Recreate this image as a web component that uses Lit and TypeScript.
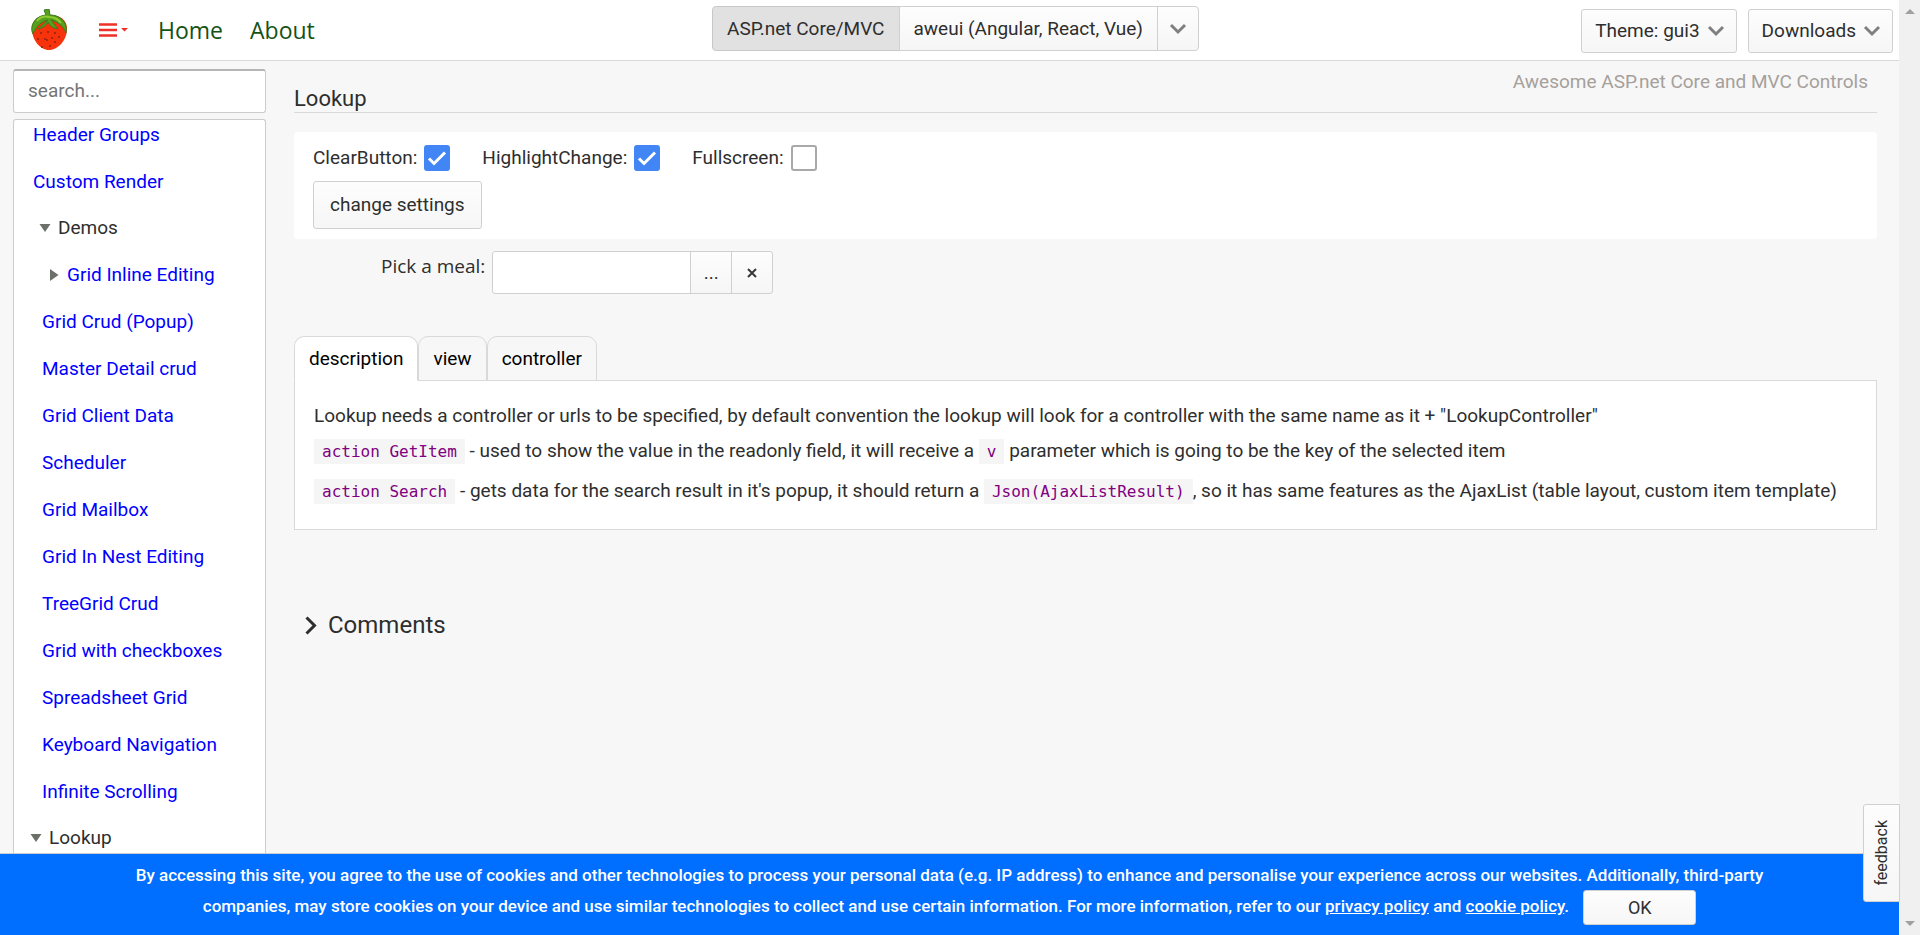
import { LitElement, html, css, nothing } from "lit";
import { customElement, state } from "lit/decorators.js";

interface MenuItem {
  label: string;
  level: number;
  node?: "open" | "closed";
  plain?: boolean;
}

const MENU: MenuItem[] = [
  { label: "Header Groups", level: 0 },
  { label: "Custom Render", level: 0 },
  { label: "Demos", level: 1, node: "open", plain: true },
  { label: "Grid Inline Editing", level: 2, node: "closed" },
  { label: "Grid Crud (Popup)", level: 1 },
  { label: "Master Detail crud", level: 1 },
  { label: "Grid Client Data", level: 1 },
  { label: "Scheduler", level: 1 },
  { label: "Grid Mailbox", level: 1 },
  { label: "Grid In Nest Editing", level: 1 },
  { label: "TreeGrid Crud", level: 1 },
  { label: "Grid with checkboxes", level: 1 },
  { label: "Spreadsheet Grid", level: 1 },
  { label: "Keyboard Navigation", level: 1 },
  { label: "Infinite Scrolling", level: 1 },
  { label: "Lookup", level: 0, node: "open", plain: true },
];

const chevron = html`<svg class="chevron" width="18" height="12" viewBox="0 0 18 12" aria-hidden="true">
  <path d="M2 2 L9 9 L16 2" fill="none" stroke="#808080" stroke-width="3" />
</svg>`;

@customElement("app-root")
export class AppRoot extends LitElement {
  @state() private tab = "description";

  static styles = css`
    :host {
      display: flex;
      height: 100vh;
      overflow: hidden;
      background: #f7f7f7;
      color: #2e2e2e;
      font: 19px/28px Roboto, sans-serif;
    }
    * { box-sizing: border-box; }
    button, input { font: inherit; color: inherit; margin: 0; }
    a { text-decoration: none; }
    .page {
      position: relative;
      flex: 1;
      min-width: 0;
      display: flex;
      flex-direction: column;
    }
    .btn {
      display: inline-flex;
      align-items: center;
      justify-content: center;
      gap: 7px;
      padding: 0 14px;
      border: 1px solid #d0d0d0;
      border-radius: 3px;
      background: linear-gradient(#fdfdfd, #f6f6f6);
      white-space: nowrap;
      cursor: pointer;
    }
    .header {
      display: grid;
      grid-template-columns: 1fr auto 1fr;
      height: 61px;
      flex: none;
      padding: 0 6px 0 20px;
      background: #fff;
      border-bottom: 1px solid #d9d9d9;
    }
    .switch, .tools { margin-left: -1px; }
    .nav { display: flex; align-items: center; padding-left: 8px; }
    .logo { display: flex; margin-right: 29px; }
    .burger {
      display: flex;
      align-items: center;
      gap: 4px;
      margin-right: 30px;
      padding: 0;
      border: 0;
      background: none;
    }
    .nav-link {
      margin-right: 27px;
      color: #145214;
      font-family: "Open Sans", sans-serif;
      font-size: 23px;
    }
    .switch { display: flex; height: 45px; margin-top: 6px; }
    .switch .btn { border-radius: 0; margin-left: -1px; }
    .switch .btn:first-child { border-radius: 4px 0 0 4px; }
    .switch .btn:last-child { border-radius: 0 4px 4px 0; padding: 0 11px; }
    .switch .btn.on { background: #e1e1e1; border-color: #c8c8c8; }
    .tools { display: flex; justify-content: flex-end; gap: 11px; padding-top: 9px; }
    .tools .btn { height: 44px; padding: 0 11px 0 13px; }
    .body { display: flex; flex: 1; min-height: 0; padding: 8px 22px 0 13px; }
    .side {
      display: flex;
      flex-direction: column;
      width: 253px;
      flex: none;
      gap: 6px;
    }
    .search {
      width: 100%;
      height: 44px;
      padding: 0 14px 2px;
      border: 1px solid #ccc;
      border-top: 2px solid #b5b5b5;
      border-radius: 3px;
      background: #fff;
    }
    .search::placeholder { color: #757575; opacity: 1; }
    .menu {
      flex: 1;
      min-height: 0;
      overflow: hidden;
      margin: 0;
      padding: 0 0 0 19px;
      list-style: none;
      border: 1px solid #ccc;
      border-bottom: 0;
      border-radius: 3px 3px 0 0;
      background: #fff;
    }
    .item { display: flex; align-items: center; height: 47px; gap: 7px; }
    .menu .item:first-child { height: 30px; margin-bottom: 8px; }
    .lv1 { padding-left: 9px; }
    .lv2 { padding-left: 17px; }
    .item.open { height: 46px; margin-left: -3px; }
    .item a { color: #00f; }
    .main { flex: 1; min-width: 0; margin-left: 28px; }
    .top {
      display: flex;
      justify-content: space-between;
      height: 44px;
      border-bottom: 1px solid #d9d9d9;
    }
    .title { margin: 15px 0 0; font-weight: 400; font-size: 22px; line-height: 30px; }
    .slogan { margin-right: 9px; line-height: 26px; color: #a6a09c; }
    .settings {
      display: flex;
      flex-direction: column;
      align-items: flex-start;
      gap: 10px;
      margin-top: 19px;
      padding: 13px 19px 10px;
      border-radius: 4px;
      background: #fff;
    }
    .checks { display: flex; gap: 32px; height: 26px; align-items: center; }
    .check { display: flex; align-items: center; gap: 7px; line-height: 26px; }
    .check input {
      appearance: none;
      width: 26px;
      height: 26px;
      border: 2px solid #a9a9a9;
      border-radius: 3px;
      background: #fff;
    }
    .check input:checked {
      border-color: #4285f4;
      background: #4285f4 url("data:image/svg+xml,%3Csvg xmlns='http://www.w3.org/2000/svg' viewBox='0 0 22 22'%3E%3Cpath d='M3 11.5l5 5L19 5.500' fill='none' stroke='white' stroke-width='3'/%3E%3C/svg%3E") center / 22px no-repeat;
    }
    .settings .btn { height: 48px; padding: 0 16px; }
    .meal { display: flex; gap: 7px; margin: 12px 0 0 87px; }
    .meal-label { font-family: "Open Sans", sans-serif; font-size: 19px; line-height: 30px; }
    .lookup { display: flex; height: 43px; }
    .lookup input {
      width: 199px;
      border: 1px solid #d0d0d0;
      border-radius: 3px 0 0 3px;
      background: #fff;
    }
    .lookup .btn { width: 42px; margin-left: -1px; padding: 0; border-radius: 0; }
    .lookup .btn:last-child { border-radius: 0 3px 3px 0; }
    .tabs { display: flex; margin-top: 42px; }
    .tab {
      height: 45px;
      margin: 0 0 -1px;
      padding: 0 14px;
      border: 1px solid #d9d9d9;
      border-radius: 10px 10px 0 0;
      background: #f7f7f7;
      color: #000;
      position: relative;
    }
    .tab.on { background: #fff; border-bottom-color: #fff; }
    .panel {
      padding: 20px 19px 18px;
      border: 1px solid #d9d9d9;
      background: #fff;
    }
    .panel p { margin: 0; line-height: 30px; }
    .panel p + p { line-height: 40px; }
    code {
      padding: 3px 8px;
      background: #f5f5f5;
      color: purple;
      font: 16px "DejaVu Sans Mono", monospace;
    }
    .comments {
      display: flex;
      align-items: center;
      gap: 11px;
      margin: 80px 0 0 11px;
      padding: 0;
      border: 0;
      background: none;
      font-size: 24px;
      line-height: 30px;
    }
    .cookies {
      flex: none;
      height: 82px;
      padding: 6px 110px 0;
      border-top: 1px solid #ccc;
      background: #006eff;
      color: #fff;
      text-align: center;
      font-size: 17px;
      font-weight: 500;
      line-height: 30px;
    }
    .cookies p { margin: 0; }
    .cookies a { color: #fff; text-decoration: underline; }
    .cookies .btn {
      width: 113px;
      height: 35px;
      margin-left: 10px;
      color: #2e2e2e;
      font-size: 18px;
      font-weight: 400;
      vertical-align: middle;
    }
    .feedback {
      position: absolute;
      right: -1px;
      bottom: 33px;
      width: 37px;
      height: 98px;
      padding: 0;
      border-radius: 3px 0 0 3px;
      font-size: 16px;
    }
    .feedback span { writing-mode: vertical-rl; transform: rotate(180deg); }
    .scroll {
      display: flex;
      flex-direction: column;
      justify-content: space-between;
      align-items: center;
      width: 21px;
      flex: none;
      padding: 9px 0;
      background: #f0f0f0;
    }
  `;

  private marker(node?: string) {
    if (!node) return nothing;
    return node === "open"
      ? html`<svg width="12" height="10" viewBox="0 0 12 10"><path d="M0.500 1h11L6 9z" fill="#6b7068" /></svg>`
      : html`<svg width="10" height="12" viewBox="0 0 10 12"><path d="M0 0v12l8.500-6z" fill="#6b7068" /></svg>`;
  }

  private check(label: string, checked: boolean) {
    return html`<label class="check">${label} <input type="checkbox" .checked=${checked} /></label>`;
  }

  render() {
    return html`
      <div class="page">
        <header class="header">
          <nav class="nav">
            <a class="logo" href="#" aria-label="Home page">
              <svg width="42" height="42" viewBox="0 0 42 42">
                <path d="M4 20C4 10 11 6 21 6s18 4 18 14c0 11-9 21-18 21S4 31 4 20z" fill="#f7330b" />
                <path d="M20 11C14 12 8 17 5 25C1 17 7 7 18 6L16 1l5-1 1 6c10 0 18 7 16 18C35 16 28 12 23 11l7 9c-6-1-9-4-10-7-2 4-6 6-10 7z" fill="#55a01c" stroke="#3c7a1e" />
                <path d="M9 12C12 8 17 7 21 8c5 0 9 2 12 6" fill="none" stroke="#8ccc32" stroke-width="2" />
                <path d="M13 23v2m7-3v2m7-1v2m-17 4v2m7-2v2m7-3v2m7-3v2m-17 8v2m8-3v2m-3-8v2m8 0v2" stroke="#8f2410" stroke-width="1.500" />
              </svg>
            </a>
            <button class="burger" aria-label="Menu">
              <svg width="18" height="14" viewBox="0 0 18 14"><path d="M0 1.500h18M0 7h18M0 12.500h18" stroke="#ee3028" stroke-width="2.500" /></svg>
              <svg width="7" height="4" viewBox="0 0 7 4"><path d="M0 0h7L3.500 3.500z" fill="#ee3028" /></svg>
            </button>
            <a class="nav-link" href="#">Home</a>
            <a class="nav-link" href="#">About</a>
          </nav>
          <div class="switch">
            <button class="btn on">ASP.net Core/MVC</button>
            <button class="btn">aweui (Angular, React, Vue)</button>
            <button class="btn more" aria-label="More">${chevron}</button>
          </div>
          <div class="tools">
            <button class="btn">Theme: gui3 ${chevron}</button>
            <button class="btn">Downloads ${chevron}</button>
          </div>
        </header>
        <div class="body">
          <aside class="side">
            <input class="search" type="text" placeholder="search..." aria-label="search" />
            <ul class="menu">
              ${MENU.map(
                (m) => html`<li class="item lv${m.level} ${m.node ?? ""}">
                  ${this.marker(m.node)}${m.plain ? html`<span>${m.label}</span>` : html`<a href="#">${m.label}</a>`}
                </li>`
              )}
            </ul>
          </aside>
          <main class="main">
            <div class="top">
              <h1 class="title">Lookup</h1>
              <span class="slogan">Awesome ASP.net Core and MVC Controls</span>
            </div>
            <section class="settings">
              <div class="checks">
                ${this.check("ClearButton:", true)} ${this.check("HighlightChange:", true)} ${this.check("Fullscreen:", false)}
              </div>
              <button class="btn">change settings</button>
            </section>
            <div class="meal">
              <label class="meal-label" for="meal">Pick a meal:</label>
              <div class="lookup">
                <input id="meal" type="text" readonly />
                <button class="btn">...</button>
                <button class="btn" aria-label="clear">
                  <svg width="10" height="10" viewBox="0 0 10 10"><path d="M1 1l8 8M9 1l-8 8" stroke="#3a3a3a" stroke-width="2" /></svg>
                </button>
              </div>
            </div>
            <div class="tabs" role="tablist">
              ${["description", "view", "controller"].map(
                (t) => html`<button class="tab ${t === this.tab ? "on" : ""}" role="tab" @click=${() => (this.tab = t)}>${t}</button>`
              )}
            </div>
            <div class="panel" role="tabpanel">
              <p>Lookup needs a controller or urls to be specified, by default convention the lookup will look for a controller with the same name as it + "LookupController"</p>
              <p><code>action GetItem</code> - used to show the value in the readonly field, it will receive a <code>v</code> parameter which is going to be the key of the selected item</p>
              <p><code>action Search</code> - gets data for the search result in it's popup, it should return a <code>Json(AjaxListResult)</code>, so it has same features as the AjaxList (table layout, custom item template)</p>
            </div>
            <button class="comments">
              <svg width="12" height="19" viewBox="0 0 12 19"><path d="M1.500 1.500l8 8-8 8" fill="none" stroke="#2e2e2e" stroke-width="3" /></svg>
              Comments
            </button>
          </main>
        </div>
        <footer class="cookies">
          <p>
            By accessing this site, you agree to the use of cookies and other technologies to process your personal data (e.g. IP address) to enhance and personalise your experience across our websites. Additionally, third-party companies, may store cookies on your device and use similar technologies to collect and use certain information. For more information, refer to our
            <a href="#">privacy policy</a> and <a href="#">cookie policy</a>.
            <button class="btn">OK</button>
          </p>
        </footer>
        <button class="btn feedback"><span>feedback</span></button>
      </div>
      <div class="scroll" aria-hidden="true">
        <svg width="10" height="5" viewBox="0 0 10 5"><path d="M0 5h10L5 0z" fill="#a0a0a0" /></svg>
        <svg width="10" height="5" viewBox="0 0 10 5"><path d="M0 0h10L5 5z" fill="#a0a0a0" /></svg>
      </div>
    `;
  }
}
